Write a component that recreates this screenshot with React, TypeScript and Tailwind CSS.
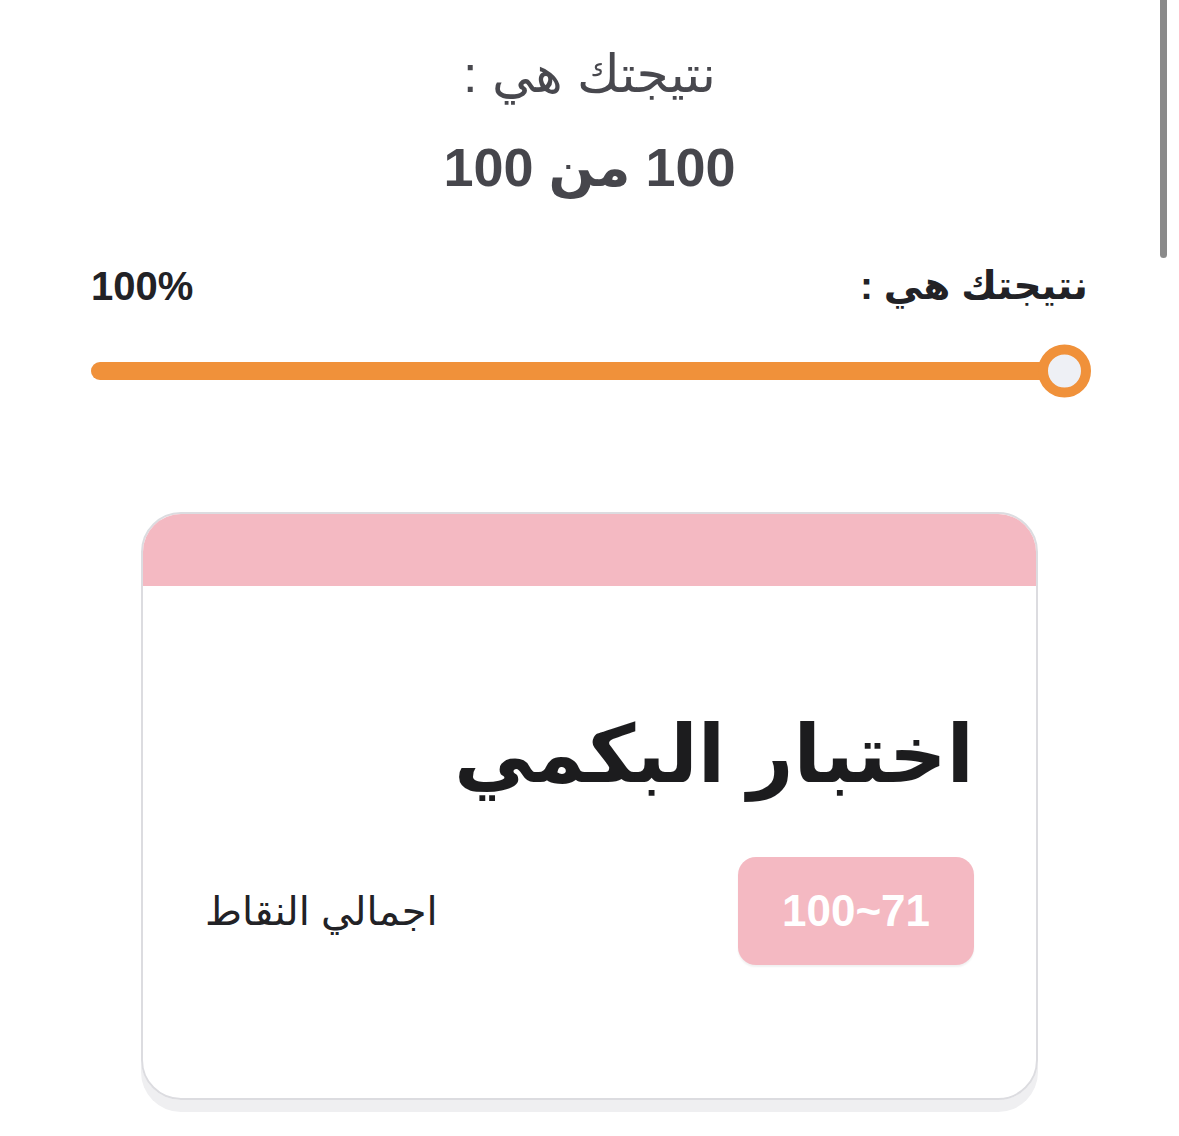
import React from 'react'

const font = { fontFamily: '"Liberation Sans", "DejaVu Sans", sans-serif' }

export default function App() {
  const percent = 100

  return (
    <div dir="rtl" className="relative min-h-[1136px] w-full bg-white" style={font}>
      {/* overlay scrollbar */}
      <div className="absolute right-[12px] top-0 h-[258px] w-[7px] rounded-b-full bg-[#8a8a8a]" />

      {/* score header */}
      <div className="flex flex-col items-center pt-[44px]">
        <h2 className="text-[52px] leading-[60px] text-[#48484e]">نتيجتك هي :</h2>
        <p className="mt-[32px] text-[54px] font-bold leading-[62px] text-[#46464c]">100 من 100</p>
      </div>

      {/* progress */}
      <div className="mt-[64px] px-[91px]">
        <div className="flex items-center justify-between">
          <span className="text-[39px] font-bold leading-[48px] text-[#222226]">نتيجتك هي :</span>
          <span className="text-[40px] font-bold leading-[48px] text-[#222226]">{percent}%</span>
        </div>
        <div className="relative mt-[52px] h-[18px] rounded-full bg-[#ececef]">
          <div className="h-full rounded-full bg-[#f0913a]" style={{ width: percent + '%' }} />
          <div className="absolute right-[-3px] top-1/2 h-[53px] w-[53px] -translate-y-1/2 rounded-full border-[10px] border-[#f0913a] bg-[#eef0f5]" />
        </div>
      </div>

      {/* card */}
      <div className="mx-auto mt-[132px] w-[897px] rounded-[40px] shadow-[0_12px_0_#efeff1]">
        <div className="overflow-hidden rounded-[40px] border-2 border-[#dcdce0] bg-white">
          <div className="h-[72px] bg-[#f4b9c2]" />
          <div className="px-[62px] pb-[133px] pt-[119px]">
            <h1 className="text-[80px] font-bold leading-[100px] text-[#1c1c1e]">اختبار البكمي</h1>
            <div className="mt-[52px] flex items-center justify-between">
              <div className="flex h-[108px] w-[236px] items-center justify-center rounded-[18px] bg-[#f4b9c2] shadow-[0_2px_2px_rgba(0,0,0,0.06)]">
                <span dir="ltr" className="text-[44px] font-bold text-white">100~71</span>
              </div>
              <span className="text-[40px] leading-[50px] text-[#222226]">اجمالي النقاط</span>
            </div>
          </div>
        </div>
      </div>
    </div>
  )
}
